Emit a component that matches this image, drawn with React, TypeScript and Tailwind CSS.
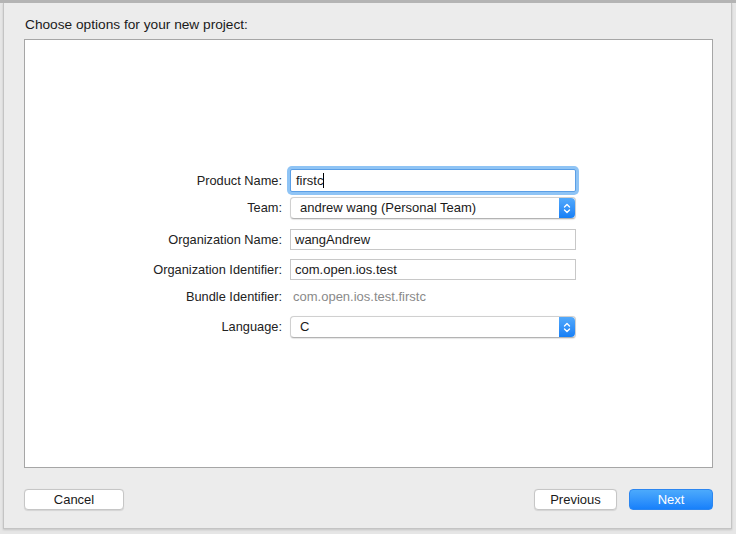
import React from "react";

const Stepper = () => (
  <div className="w-[16px] h-full rounded-r-[4px] bg-gradient-to-b from-[#52a9fb] to-[#157ff6] flex items-center justify-center">
    <svg width="8" height="13" viewBox="0 0 8 13" fill="none" stroke="white" strokeWidth="1.4" strokeLinecap="round" strokeLinejoin="round">
      <path d="M1.5 5 L4 2.5 L6.5 5" />
      <path d="M1.5 8 L4 10.5 L6.5 8" />
    </svg>
  </div>
);

const Popup = ({ value, h }: { value: string; h: string }) => (
  <div className={`w-[286px] ${h} flex items-stretch bg-white border border-[#d0d0d0] border-b-[#b3b3b3] rounded-[4px] shadow-[0_0.5px_1px_rgba(0,0,0,0.1)]`}>
    <div className="flex-1 pl-[9px] flex items-center text-[13px] text-[#1a1a1a]">{value}</div>
    <Stepper />
  </div>
);

const Field = ({ value, h }: { value: string; h: string }) => (
  <div className={`w-[286px] ${h} flex items-center bg-white border border-[#c8c8c8] pl-[4px] text-[13px] text-[#1a1a1a]`}>
    {value}
  </div>
);

const Row = ({ label, children, cls }: { label: string; children: React.ReactNode; cls: string }) => (
  <div className={`flex items-center ${cls}`}>
    <div className="w-[257px] text-right text-[12.8px] text-[#222]">{label}</div>
    <div className="ml-[8px]">{children}</div>
  </div>
);

export default function App() {
  return (
    <div
      className="w-[736px] h-[534px] bg-[#e6e6e6] border-t-[3px] border-[#b4b4b4] overflow-hidden"
      style={{ fontFamily: '"Liberation Sans", Arial, sans-serif' }}
    >
      <div className="ml-[3px] w-[729px] h-[526px] bg-[#ececec] border-l border-r border-b border-[#c4c4c4] shadow-[0_1px_2px_rgba(0,0,0,0.15)] flex flex-col">
        <div className="h-[36px] pl-[21px] pt-[13px] text-[13.7px] text-[#1a1a1a] leading-[17px]">
          Choose options for your new project:
        </div>
        <div className="ml-[20px] w-[689px] h-[429px] bg-white border border-[#a6a6a6] flex flex-col">
          <Row label="Product Name:" cls="mt-[129px]">
            <div className="w-[286px] h-[23px] flex items-center bg-white border border-[#5b9fe6] ring-[3px] ring-[#8fc4f5] rounded-[2px] pl-[5px] text-[13px] text-[#1a1a1a]">
              firstc<span className="w-px h-[15px] bg-black inline-block" />
            </div>
          </Row>
          <Row label="Team:" cls="mt-[5px]">
            <Popup value="andrew wang (Personal Team)" h="h-[22px]" />
          </Row>
          <Row label="Organization Name:" cls="mt-[10px]">
            <Field value="wangAndrew" h="h-[21px]" />
          </Row>
          <Row label="Organization Identifier:" cls="mt-[9px]">
            <Field value="com.open.ios.test" h="h-[21px]" />
          </Row>
          <Row label="Bundle Identifier:" cls="mt-[7px] h-[20px]">
            <div className="pl-[3px] text-[13px] text-[#8a8a8a]">com.open.ios.test.firstc</div>
          </Row>
          <Row label="Language:" cls="mt-[9px]">
            <Popup value="C" h="h-[22px]" />
          </Row>
        </div>
        <div className="flex items-center mt-[21px] pl-[20px] pr-[18px]">
          <button className="w-[100px] h-[21px] bg-white border border-[#c6c6c6] rounded-[4px] text-[13px] text-[#1a1a1a] shadow-[0_0.5px_1px_rgba(0,0,0,0.1)] flex items-center justify-center">
            Cancel
          </button>
          <div className="flex-1" />
          <button className="w-[83px] h-[21px] bg-white border border-[#c6c6c6] rounded-[4px] text-[13px] text-[#1a1a1a] shadow-[0_0.5px_1px_rgba(0,0,0,0.1)] flex items-center justify-center">
            Previous
          </button>
          <button className="ml-[12px] w-[84px] h-[21px] rounded-[4px] text-[13px] text-white bg-gradient-to-b from-[#4caafc] to-[#1780fb] border border-[#2c86f0] flex items-center justify-center">
            Next
          </button>
        </div>
      </div>
    </div>
  );
}
